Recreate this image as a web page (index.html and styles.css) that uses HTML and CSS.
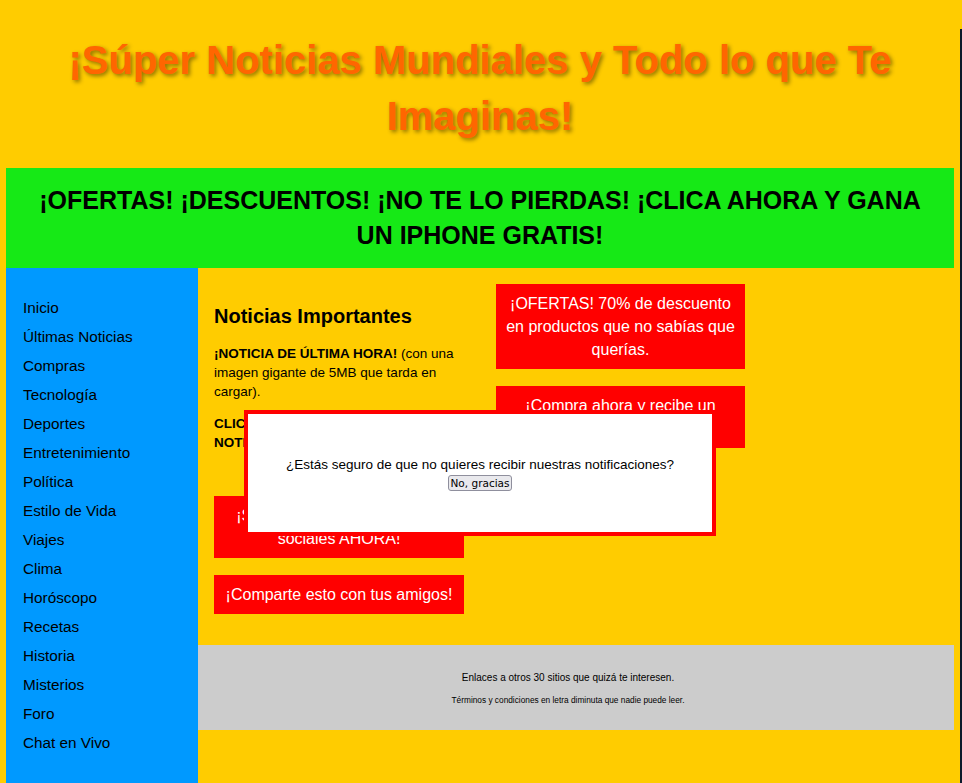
FILE: index.html
```html
<!DOCTYPE html>
<html lang="es">
<head>
<meta charset="utf-8">
<title>¡Súper Noticias Mundiales!</title>
<link rel="stylesheet" href="styles.css">
</head>
<body>
<div class="page">
  <header class="site-header">
    <h1 class="title">¡Súper Noticias Mundiales y Todo lo que Te Imaginas!</h1>
  </header>
  <div class="banner">
    <h2 class="banner-text">¡OFERTAS! ¡DESCUENTOS! ¡NO TE LO PIERDAS! ¡CLICA AHORA Y GANA UN IPHONE GRATIS!</h2>
  </div>
  <div class="layout">
    <nav class="sidenav">
      <ul class="nav-list">
        <li>Inicio</li>
        <li>Últimas Noticias</li>
        <li>Compras</li>
        <li>Tecnología</li>
        <li>Deportes</li>
        <li>Entretenimiento</li>
        <li>Política</li>
        <li>Estilo de Vida</li>
        <li>Viajes</li>
        <li>Clima</li>
        <li>Horóscopo</li>
        <li>Recetas</li>
        <li>Historia</li>
        <li>Misterios</li>
        <li>Foro</li>
        <li>Chat en Vivo</li>
      </ul>
    </nav>
    <div class="main-wrap">
      <main class="content">
        <section class="news">
          <h2 class="news-title">Noticias Importantes</h2>
          <p class="news-text"><strong>¡NOTICIA DE ÚLTIMA HORA!</strong> (con una imagen gigante de 5MB que tarda en cargar).</p>
          <p class="news-text"><strong>CLIC AQUÍ PARA VER LAS ÚLTIMAS<br>NOTICIAS INCREÍBLES</strong></p>
          <div class="red-box social">¡Síguenos en nuestras redes sociales AHORA!</div>
          <div class="red-box">¡Comparte esto con tus amigos!</div>
        </section>
        <aside class="ads">
          <div class="red-box">¡OFERTAS! 70% de descuento en productos que no sabías que querías.</div>
          <div class="red-box">¡Compra ahora y recibe un regalo sorpresa!</div>
        </aside>
      </main>
      <footer class="site-footer">
        <p class="footer-links">Enlaces a otros 30 sitios que quizá te interesen.</p>
        <p class="footer-terms">Términos y condiciones en letra diminuta que nadie puede leer.</p>
      </footer>
    </div>
  </div>
</div>
<div class="modal">
  <p class="modal-text">¿Estás seguro de que no quieres recibir nuestras notificaciones?</p>
  <button class="modal-btn" type="button">No, gracias</button>
</div>
</body>
</html>
```
FILE: styles.css
```css
html {
  background-color: #ffcc00;
}
body {
  margin: 0;
  font-family: "Comic Sans MS", "Liberation Sans", Arial, sans-serif;
  font-size: 16px;
  color: #000;
  background-color: #ffcc00;
  background-image: linear-gradient(#0c1a2b, #0c1a2b);
  background-repeat: no-repeat;
  background-position: right 0 top 29px;
  background-size: 2px 100%;
  min-height: 783px;
  overflow: hidden;
}
.page {
  width: 948px;
  padding: 0 6px;
}
.site-header {
  padding: 32px 20px 24px;
}
.title {
  margin: 0;
  text-align: center;
  font-size: 40px;
  line-height: 56px;
  font-weight: bold;
  color: #ff6600;
  text-shadow: 2px 2px 4px rgba(0, 0, 0, 0.45);
}
.banner {
  background: #16e916;
  padding: 15px 20px;
}
.banner-text {
  margin: 0;
  text-align: center;
  font-size: 25px;
  line-height: 35px;
  font-weight: bold;
}
.layout {
  display: flex;
}
.sidenav {
  width: 192px;
  flex: none;
  background: #0099ff;
  padding: 29px 0 40px 17px;
  box-sizing: border-box;
  min-height: 520px;
}
.nav-list {
  list-style: none;
  margin: 0;
  padding: 0;
}
.nav-list li {
  font-size: 15.3px;
  line-height: 22px;
  margin-bottom: 7px;
}
.main-wrap {
  flex: 1;
  display: flex;
  flex-direction: column;
}
.content {
  display: flex;
  gap: 32px;
  padding: 16px 16px 31px;
  align-items: flex-start;
}
.news {
  width: 250px;
  flex: none;
}
.ads {
  width: 249px;
  flex: none;
  display: flex;
  flex-direction: column;
  gap: 17px;
}
.news-title {
  margin: 18px 0 14px;
  font-size: 20px;
  line-height: 28px;
  font-weight: bold;
}
.news-text {
  margin: 13px 0;
  font-size: 13.5px;
  line-height: 19px;
}
.red-box {
  background: #ff0000;
  color: #fff;
  text-align: center;
  font-size: 16px;
  line-height: 23px;
  padding: 8px 7px;
}
.news .red-box {
  margin-top: 17px;
}
.news .red-box.social {
  margin-top: 44px;
}
.site-footer {
  background: #cccccc;
  text-align: center;
  padding: 26px 20px 24px 4px;
}
.footer-links {
  margin: 0 0 9px;
  font-size: 10px;
  line-height: 14px;
}
.footer-terms {
  margin: 0;
  font-size: 8.3px;
  line-height: 12px;
}
.modal {
  position: fixed;
  top: 410px;
  left: 244px;
  width: 464px;
  height: 118px;
  box-sizing: content-box;
  background: #fff;
  border: 4px solid #ff0000;
  text-align: center;
  padding: 0;
  display: flex;
  flex-direction: column;
  align-items: center;
  justify-content: center;
}
.modal-text {
  margin: 0;
  font-size: 13.5px;
  line-height: 19px;
}
.modal-btn {
  margin-top: 1px;
  font-family: "DejaVu Sans", sans-serif;
  font-size: 10.5px;
  padding: 1px 2px;
  border: 1px solid #8f8f9d;
  border-radius: 3px;
  background: #e9e9ed;
  color: #000;
}
```
